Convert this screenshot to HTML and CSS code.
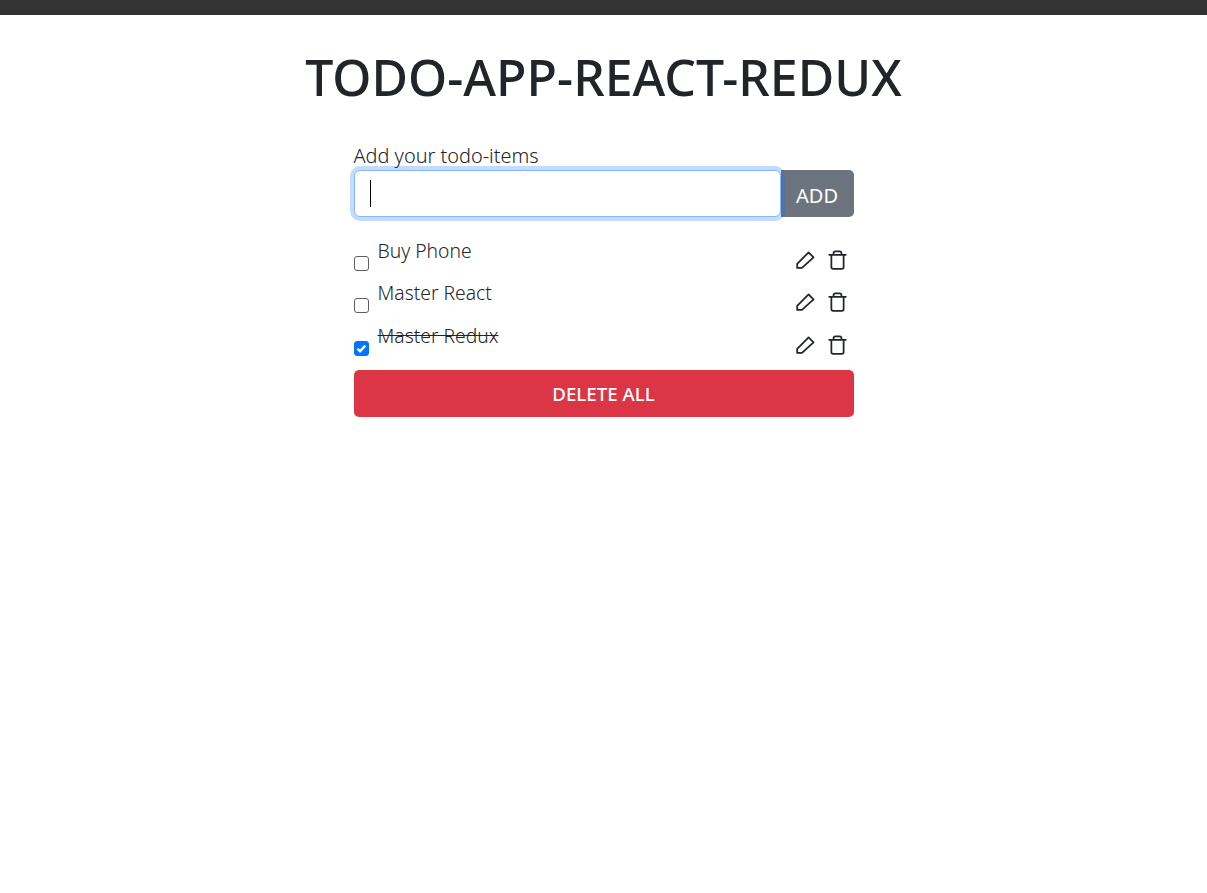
FILE: index.html
```html
<!DOCTYPE html>
<html lang="en">
<head>
<meta charset="utf-8">
<title>TODO-APP-REACT-REDUX</title>
<link rel="stylesheet" href="styles.css">
</head>
<body>
<div class="topbar"></div>
<main class="page">
  <h1 class="title">TODO-APP-REACT-REDUX</h1>
  <section class="panel">
    <label class="field-label" for="todo">Add your todo-items</label>
    <div class="add-row">
      <div class="input-wrap">
        <input id="todo" class="todo-input" type="text">
        <span class="caret"></span>
      </div>
      <button class="btn btn-add" type="button">ADD</button>
    </div>
    <ul class="todo-list">
      <li class="todo">
        <input class="check" type="checkbox">
        <span class="todo-text">Buy Phone</span>
        <span class="actions">
          <svg class="icon" viewBox="0 0 24 24"><path d="M2.500 20.500v-4.700L15.500 2.700l5.700 5.700L8 20.500z"/></svg>
          <svg class="icon" viewBox="0 0 24 24"><path d="M2.500 5.500h19M5 5.500v14a2 2 0 0 0 2 2h10a2 2 0 0 0 2-2v-14M7.500 5.500v-2a2 2 0 0 1 2-2h5a2 2 0 0 1 2 2v2"/></svg>
        </span>
      </li>
      <li class="todo">
        <input class="check" type="checkbox">
        <span class="todo-text">Master React</span>
        <span class="actions">
          <svg class="icon" viewBox="0 0 24 24"><path d="M2.500 20.500v-4.700L15.500 2.700l5.700 5.700L8 20.500z"/></svg>
          <svg class="icon" viewBox="0 0 24 24"><path d="M2.500 5.500h19M5 5.500v14a2 2 0 0 0 2 2h10a2 2 0 0 0 2-2v-14M7.500 5.500v-2a2 2 0 0 1 2-2h5a2 2 0 0 1 2 2v2"/></svg>
        </span>
      </li>
      <li class="todo">
        <input class="check" type="checkbox" checked>
        <span class="todo-text done">Master Redux</span>
        <span class="actions">
          <svg class="icon" viewBox="0 0 24 24"><path d="M2.500 20.500v-4.700L15.500 2.700l5.700 5.700L8 20.500z"/></svg>
          <svg class="icon" viewBox="0 0 24 24"><path d="M2.500 5.500h19M5 5.500v14a2 2 0 0 0 2 2h10a2 2 0 0 0 2-2v-14M7.500 5.500v-2a2 2 0 0 1 2-2h5a2 2 0 0 1 2 2v2"/></svg>
        </span>
      </li>
    </ul>
    <button class="btn btn-delete" type="button">DELETE ALL</button>
  </section>
</main>
</body>
</html>
```
FILE: styles.css
```css
* { box-sizing: border-box; }
html, body { margin: 0; padding: 0; background: #fff; }
body { font-family: "Noto Sans", "Open Sans", sans-serif; color: #212529; }
.topbar { height: 15px; background: #333; }
.page { display: flex; flex-direction: column; align-items: center; }
.title {
  margin: 30px 0 0;
  font-size: 50px;
  line-height: 64px;
  font-weight: 500;
  text-align: center;
}
.panel { width: 500px; margin-top: 33px; display: flex; flex-direction: column; }
.field-label { font-size: 19.9px; font-weight: 300; line-height: 27px; height: 28px; }
.add-row { display: flex; height: 47px; }
.input-wrap { position: relative; z-index: 1; flex: 1; display: flex; }
.todo-input {
  width: 100%;
  border: 1px solid #86b7fe;
  box-shadow: 0 0 0 4px rgba(13, 110, 253, .25);
  border-radius: 6px;
  outline: none;
  background: #fff;
}
.caret { position: absolute; left: 16px; top: 10px; width: 1px; height: 27px; background: #000; }
.btn {
  border: 0;
  color: #fff;
  font-family: inherit;
  font-weight: 400;
  font-size: 20px;
  border-radius: 0 5px 5px 0;
  padding: 0;
}
.btn-add { width: 73px; background: #6c757d; padding-top: 3px; }
.todo-list { list-style: none; margin: 20.75px 0 4.25px; padding: 0; display: flex; flex-direction: column; }
.todo { height: 42.5px; display: flex; }
.check {
  appearance: none;
  margin: 18px 9px 0 0;
  width: 15px;
  height: 15px;
  border: 1px solid #5f5f5f;
  border-radius: 3px;
  background: #fff;
  flex: none;
}
.check:checked {
  background: #0075ff center / 100% no-repeat url("data:image/svg+xml,%3Csvg xmlns='http://www.w3.org/2000/svg' viewBox='0 0 15 15'%3E%3Cpath d='M2.800 7.800l3 3 6-6.600' fill='none' stroke='%23fff' stroke-width='2.800'/%3E%3C/svg%3E");
  border-color: #0075ff;
}
.todo-text { font-size: 19.3px; font-weight: 300; line-height: 25px; height: 25px; }
.done { text-decoration: line-through; }
.actions { margin-left: auto; display: flex; gap: 11px; padding: 12px 6px 0 0; height: 36px; }
.icon { width: 21px; height: 21px; fill: none; stroke: #212529; stroke-width: 2; stroke-linejoin: round; stroke-linecap: round; }
.btn-delete { height: 47px; background: #dc3545; border-radius: 5px; font-size: 18.7px; font-weight: 500; padding-top: 1px; }
```
